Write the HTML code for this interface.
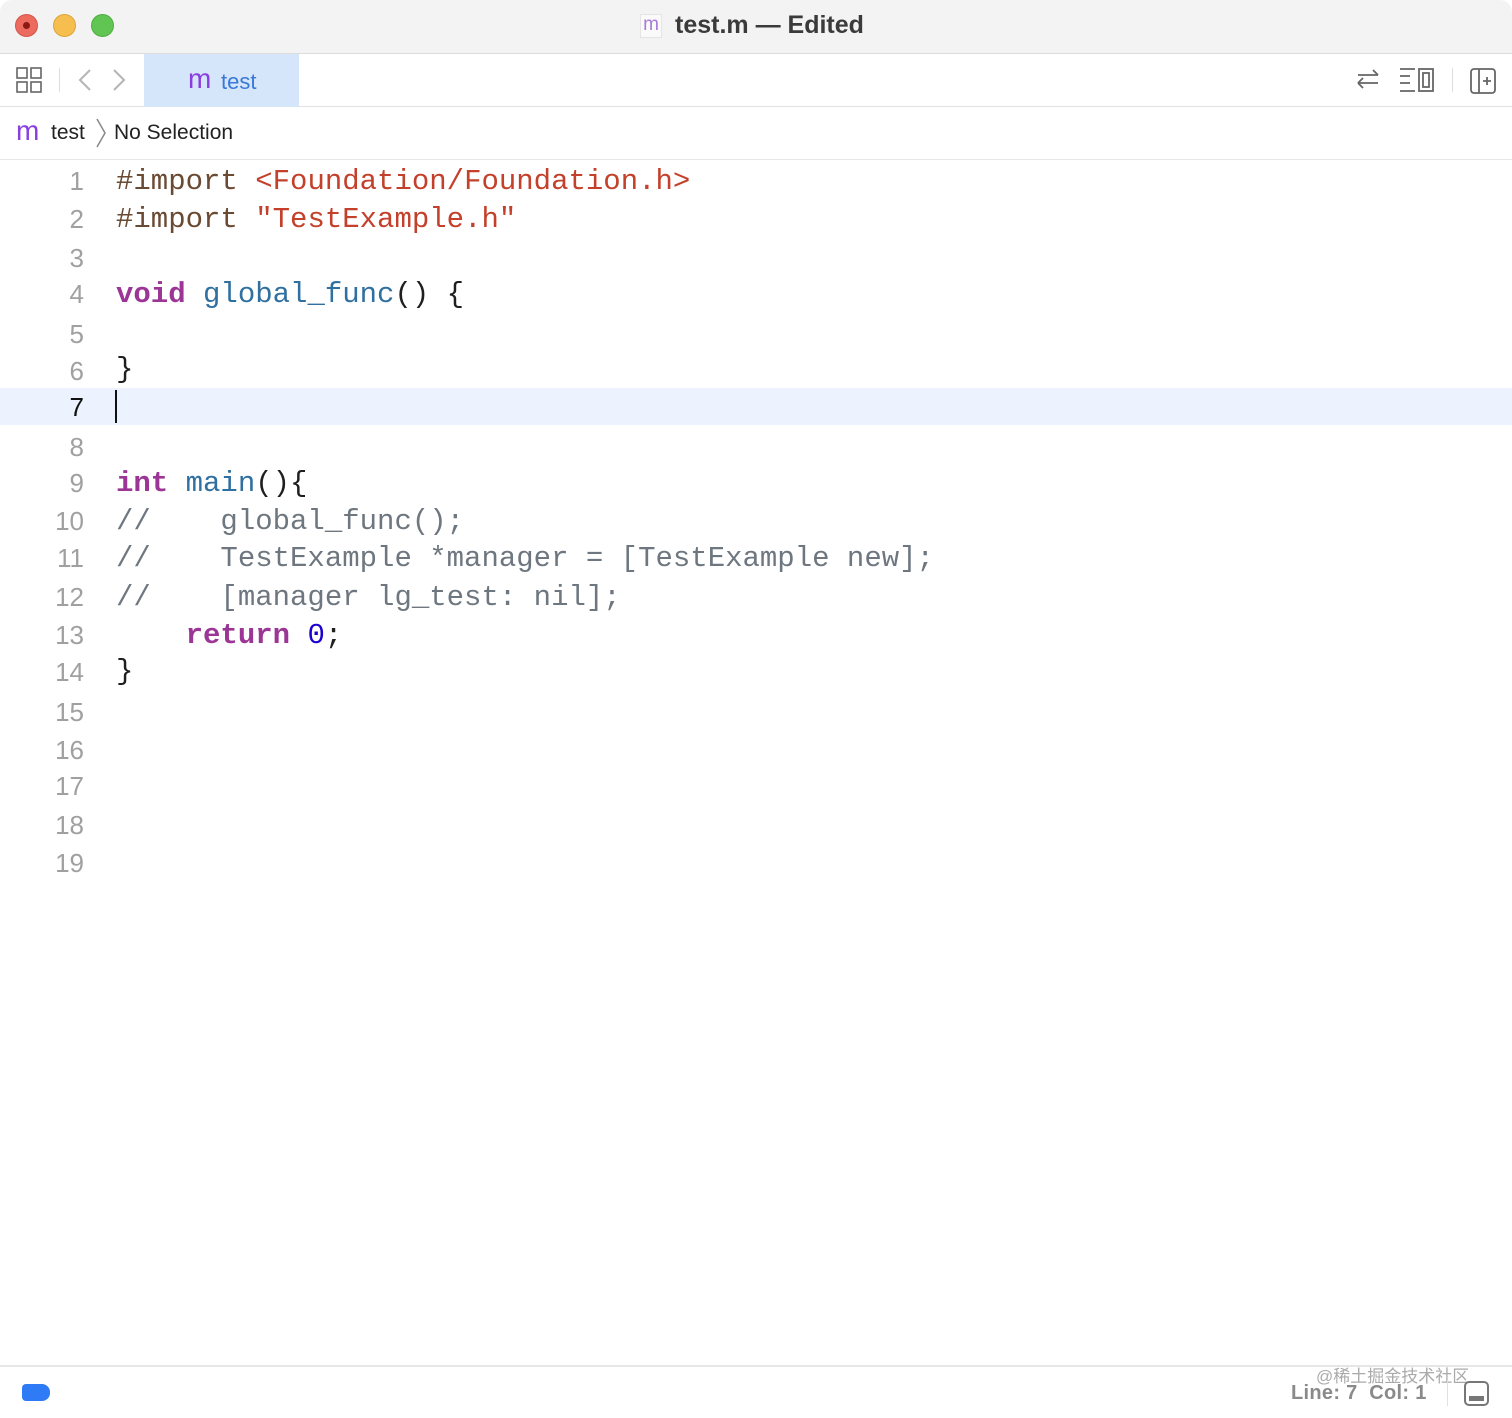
<!DOCTYPE html>
<html><head><meta charset="utf-8"><style>
*{margin:0;padding:0;box-sizing:border-box}
body{width:1512px;height:1418px;background:#fff;position:relative;overflow:hidden;font-family:"Liberation Sans",sans-serif}
.a{position:absolute}
.titlebar{left:0;top:0;width:1512px;height:54px;background:#f3f3f3;border-bottom:1px solid #dcdcdc}
.dot{width:23px;height:23px;border-radius:50%;top:14px}
.tb{left:0;top:54px;width:1512px;height:53px;border-bottom:1px solid #e2e2e2;background:#fff}
.jb{left:0;top:107px;width:1512px;height:53px;border-bottom:1px solid #e6e6e6}
.code{font-family:"Liberation Mono",monospace;font-size:29px;white-space:pre;left:116px;color:#1f1f1f;line-height:38px}
.ln{font-family:"Liberation Sans",sans-serif;font-size:26px;color:#a0a0a0;width:84px;text-align:right;left:0;line-height:38px}
.pp{color:#6b4a33}.st{color:#c3402b}.kw{color:#9b3696;font-weight:bold}.fn{color:#2f70a0}.cm{color:#6e7780}.nm{color:#1c00cf}
</style></head><body>
<div class="a titlebar" style="border-radius:12px 12px 0 0"></div>
<div class="a dot" style="left:15px;background:#ec6a5e;border:1px solid #d45548"><div class="a" style="left:7px;top:7px;width:7px;height:7px;border-radius:50%;background:#8a1a12"></div></div>
<div class="a dot" style="left:53px;background:#f5be4f;border:1px solid #dea437"></div>
<div class="a dot" style="left:91px;background:#61c554;border:1px solid #4ead40"></div>
<div class="a" style="left:640px;top:14px;width:22px;height:24px;background:#fafafa;border:1px solid #e4e4e4;color:#a97ad8;font-size:19px;text-align:center;line-height:20px">m</div>
<div class="a" style="left:675px;top:11px;font-size:25px;font-weight:bold;color:#3a3a3a">test.m — Edited</div>

<div class="a tb"></div>
<svg class="a" style="left:16px;top:67px" width="26" height="26" viewBox="0 0 26 26" fill="none" stroke="#666" stroke-width="1.6"><rect x="1" y="1" width="10" height="10"/><rect x="15" y="1" width="10" height="10"/><rect x="1" y="15" width="10" height="10"/><rect x="15" y="15" width="10" height="10"/></svg>
<div class="a" style="left:59px;top:68px;width:1px;height:24px;background:#ddd"></div>
<svg class="a" style="left:74px;top:68px" width="60" height="24" viewBox="0 0 60 24" fill="none" stroke="#b5b5b5" stroke-width="2"><path d="M16 2 L6 12 L16 22"/><path d="M40 2 L50 12 L40 22"/></svg>
<div class="a" style="left:144px;top:54px;width:155px;height:53px;background:#d5e5fa"></div>
<div class="a" style="left:188px;top:63px;font-size:28px;color:#8a3ee0">m</div>
<div class="a" style="left:221px;top:69px;font-size:22px;color:#3a78d8">test</div>
<svg class="a" style="left:1355px;top:66px" width="26" height="26" viewBox="0 0 26 26" fill="none" stroke="#666" stroke-width="1.8"><path d="M3 9 H23 M18 4 L23 9"/><path d="M23 17 H3 M8 12 L3 17 M8 22 L3 17"/></svg>
<svg class="a" style="left:1398px;top:66px" width="40" height="28" viewBox="0 0 40 28" fill="none" stroke="#666" stroke-width="1.8"><path d="M2 3H17M2 10H12M2 17H12M2 25H17"/><rect x="21" y="3" width="14" height="22"/><rect x="25" y="7" width="6" height="14"/></svg>
<div class="a" style="left:1452px;top:68px;width:1px;height:24px;background:#ddd"></div>
<svg class="a" style="left:1469px;top:67px" width="28" height="28" viewBox="0 0 28 28" fill="none" stroke="#666" stroke-width="1.8"><rect x="2" y="2" width="24" height="24" rx="3"/><path d="M10 2V26M18 10V18M14 14H22"/></svg>

<div class="a jb"></div>
<div class="a" style="left:16px;top:115px;font-size:28px;color:#8a3ee0">m</div>
<div class="a" style="left:51px;top:121px;font-size:21px;color:#222">test</div>
<svg class="a" style="left:95px;top:118px" width="12" height="30" viewBox="0 0 12 30" fill="none" stroke="#888" stroke-width="1.5"><path d="M2 1 L10 15 L2 29"/></svg>
<div class="a" style="left:114px;top:121px;font-size:21px;color:#222">No Selection</div>

<div class="a" style="left:0;top:388px;width:1512px;height:37px;background:#ecf3fe"></div>
<div class="a" style="left:115px;top:390px;width:2px;height:33px;background:#111"></div>

<div class="a ln" style="top:162px">1</div><div class="a code" style="top:163px"><span class="pp">#import </span><span class="st">&lt;Foundation/Foundation.h&gt;</span></div>
<div class="a ln" style="top:200px">2</div><div class="a code" style="top:201px"><span class="pp">#import </span><span class="st">"TestExample.h"</span></div>
<div class="a ln" style="top:239px">3</div>
<div class="a ln" style="top:275px">4</div><div class="a code" style="top:276px"><span class="kw">void</span> <span class="fn">global_func</span>() {</div>
<div class="a ln" style="top:315px">5</div>
<div class="a ln" style="top:352px">6</div><div class="a code" style="top:351px">}</div>
<div class="a ln" style="top:388px;color:#111">7</div>
<div class="a ln" style="top:428px">8</div>
<div class="a ln" style="top:464px">9</div><div class="a code" style="top:465px"><span class="kw">int</span> <span class="fn">main</span>(){</div>
<div class="a ln" style="top:502px">10</div><div class="a code cm" style="top:503px">//    global_func();</div>
<div class="a ln" style="top:539px">11</div><div class="a code cm" style="top:540px">//    TestExample *manager = [TestExample new];</div>
<div class="a ln" style="top:578px">12</div><div class="a code cm" style="top:579px">//    [manager lg_test: nil];</div>
<div class="a ln" style="top:616px">13</div><div class="a code" style="top:617px">    <span class="kw">return</span> <span class="nm">0</span>;</div>
<div class="a ln" style="top:653px">14</div><div class="a code" style="top:653px">}</div>
<div class="a ln" style="top:693px">15</div>
<div class="a ln" style="top:731px">16</div>
<div class="a ln" style="top:767px">17</div>
<div class="a ln" style="top:806px">18</div>
<div class="a ln" style="top:844px">19</div>

<div class="a" style="left:0;top:1365px;width:1512px;height:2px;background:#e6e6e6"></div>
<div class="a" style="left:22px;top:1384px;width:28px;height:17px;background:#2f7bf5;border-radius:4px 8px 8px 4px"></div>
<div class="a" style="left:1316px;top:1362px;font-size:17px;color:#aaa;font-family:'Liberation Sans','Noto Sans CJK SC',sans-serif">@稀土掘金技术社区</div>
<div class="a" style="left:1291px;top:1382px;font-size:20px;font-weight:600;color:#8a8a8a;letter-spacing:0.3px">Line: 7&nbsp;&nbsp;Col: 1</div>
<div class="a" style="left:1447px;top:1380px;width:1px;height:26px;background:#e0e0e0"></div>
<div class="a" style="left:1464px;top:1381px;width:25px;height:25px;border:2px solid #777;border-radius:5px"><div class="a" style="left:3px;bottom:3px;width:15px;height:5px;background:#777"></div></div>
</body></html>
